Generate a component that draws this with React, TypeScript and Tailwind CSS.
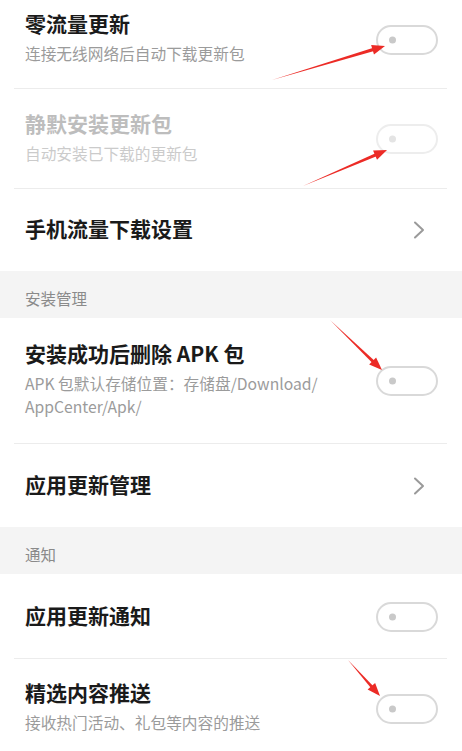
import type { ReactNode } from 'react'

const font = { fontFamily: '"Noto Sans CJK SC", "Noto Sans", sans-serif' }

function Toggle({ disabled = false }: { disabled?: boolean }) {
  return (
    <div
      className={
        'relative h-[30px] w-[62px] shrink-0 rounded-full border-2 bg-white ' +
        (disabled ? 'border-[#ededed]' : 'border-[#d9d9d9]')
      }
    >
      <span
        className={
          'absolute left-[11px] top-1/2 h-[7px] w-[7px] -translate-y-1/2 rounded-full ' +
          (disabled ? 'bg-[#e4e4e4]' : 'bg-[#c9c9c9]')
        }
      />
    </div>
  )
}

function Chevron() {
  return (
    <svg width="14" height="20" viewBox="0 0 14 20" className="mr-[12px] shrink-0">
      <path d="M3 2.5 L11 10 L3 17.5" fill="none" stroke="#9a9a9a" strokeWidth="2" strokeLinecap="round" strokeLinejoin="round" />
    </svg>
  )
}

function Row({
  title,
  sub,
  right,
  disabled = false,
  divider = true,
  className = '',
}: {
  title: string
  sub?: ReactNode
  right: ReactNode
  disabled?: boolean
  divider?: boolean
  className?: string
}) {
  return (
    <div className={'relative flex items-center justify-between pl-[25px] pr-[24px] ' + className}>
      <div className="flex min-w-0 -translate-y-[2px] flex-col">
        <div
          className={
            'text-[21px] font-semibold leading-[26px] ' + (disabled ? 'text-[#bdbdbd]' : 'text-[#1a1a1a]')
          }
        >
          {title}
        </div>
        {sub && (
          <div
            className={
              'mt-[6px] max-w-[300px] text-[15.7px] leading-[23px] ' +
              (disabled ? 'text-[#cbcbcb]' : 'text-[#9b9b9b]')
            }
          >
            {sub}
          </div>
        )}
      </div>
      {right}
      {divider && <div className="absolute bottom-0 left-[14px] right-[15px] h-px bg-[#ececec]" />}
    </div>
  )
}

function Header({ label, className = '' }: { label: string; className?: string }) {
  return (
    <div className={'bg-[#f4f4f4] pl-[25px] pt-[17px] text-[15.5px] leading-[20px] text-[#8a8a8a] ' + className}>
      {label}
    </div>
  )
}

const arrows: [number, number, number, number][] = [
  [272, 80, 385, 46],
  [303, 186, 387, 150],
  [330, 320, 382, 370],
  [348, 660, 380, 696],
]

function Arrows() {
  return (
    <svg className="pointer-events-none absolute left-0 top-0" width="462" height="751">
      {arrows.map(([x1, y1, x2, y2], i) => {
        const len = Math.hypot(x2 - x1, y2 - y1)
        const dx = (x2 - x1) / len
        const dy = (y2 - y1) / len
        const bx = x2 - dx * 13
        const by = y2 - dy * 13
        const nx = -dy
        const ny = dx
        const pts = `${x2},${y2} ${bx + nx * 5},${by + ny * 5} ${bx - nx * 5},${by - ny * 5}`
        const sx = x2 - dx * 10
        const sy = y2 - dy * 10
        const tail = `${x1},${y1} ${sx + nx * 1.6},${sy + ny * 1.6} ${sx - nx * 1.6},${sy - ny * 1.6}`
        return (
          <g key={i} fill="#ec2b26">
            <polygon points={tail} />
            <polygon points={pts} />
          </g>
        )
      })}
    </svg>
  )
}

export default function App() {
  return (
    <div className="relative h-[751px] w-[462px] overflow-hidden bg-white" style={font}>
      <div className="flex flex-col">
        <Row
          className="-mt-[10px] h-[99px]"
          title="零流量更新"
          sub="连接无线网络后自动下载更新包"
          right={<Toggle />}
        />
        <Row
          className="h-[100px]"
          title="静默安装更新包"
          sub="自动安装已下载的更新包"
          right={<Toggle disabled />}
          disabled
        />
        <Row className="h-[82px]" title="手机流量下载设置" right={<Chevron />} divider={false} />
        <Header className="h-[47px]" label="安装管理" />
        <Row
          className="h-[126px]"
          title="安装成功后删除 APK 包"
          sub={
            <>
              APK 包默认存储位置：存储盘/Download/
              <br />
              AppCenter/Apk/
            </>
          }
          right={<Toggle />}
        />
        <Row className="h-[83px]" title="应用更新管理" right={<Chevron />} divider={false} />
        <Header className="h-[47px]" label="通知" />
        <Row className="h-[85px]" title="应用更新通知" right={<Toggle />} />
        <Row
          className="h-[99px]"
          title="精选内容推送"
          sub="接收热门活动、礼包等内容的推送"
          right={<Toggle />}
          divider={false}
        />
      </div>
      <Arrows />
    </div>
  )
}
